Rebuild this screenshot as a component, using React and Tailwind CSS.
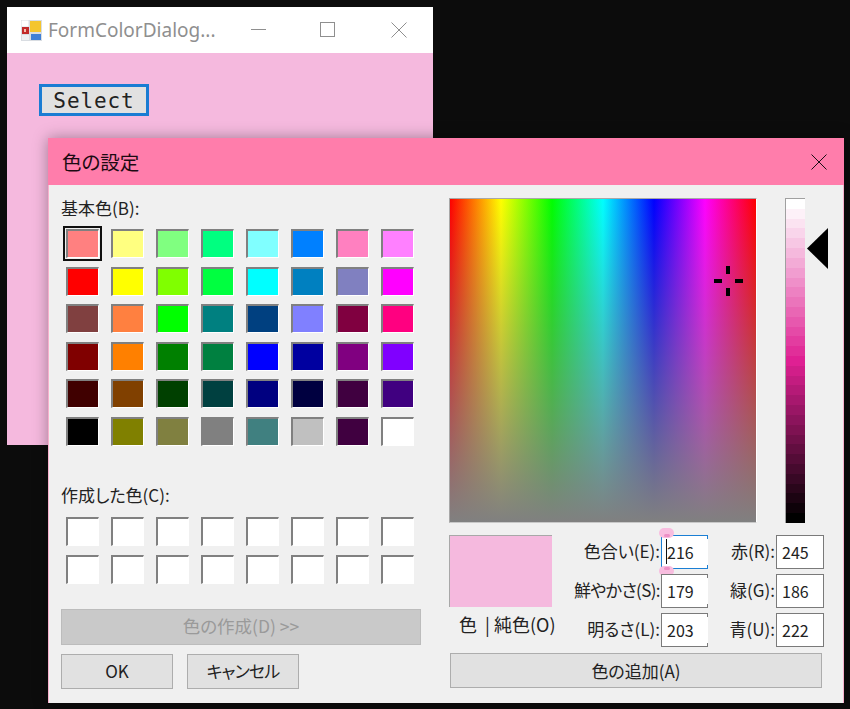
import React from 'react';

const basicColors = [
    '#ff8080', '#ffff80', '#80ff80', '#00ff80', '#80ffff', '#0080ff', '#ff80c0', '#ff80ff',
    '#ff0000', '#ffff00', '#80ff00', '#00ff40', '#00ffff', '#0080c0', '#8080c0', '#ff00ff',
    '#804040', '#ff8040', '#00ff00', '#008080', '#004080', '#8080ff', '#800040', '#ff0080',
    '#800000', '#ff8000', '#008000', '#008040', '#0000ff', '#0000a0', '#800080', '#8000ff',
    '#400000', '#804000', '#004000', '#004040', '#000080', '#000040', '#400040', '#400080',
    '#000000', '#808000', '#808040', '#808080', '#408080', '#c0c0c0', '#400040', '#ffffff',
];

const jp = 'font-["Noto_Sans_CJK_JP","Noto_Sans",sans-serif] [font-feature-settings:"palt"]';

// lum bar: hue 216 / sat 179 in the windows 0-240 scale
const lumSteps = Array.from({ length: 33 }, (_, i) => {
    const l = 100 - (i * 100) / 32;
    return `hsl(324 75% ${l}%)`;
});

function Swatch({ color, selected }) {
    return (
        <div className={`relative h-[29px] w-[33px] border-t-2 border-l-2 border-t-[#808080] border-l-[#808080] border-r border-b border-r-white border-b-white ${selected ? 'outline-2 outline-offset-1 outline-[#101010]' : ''}`}>
            <div className="h-full w-full" style={{ backgroundColor: color }} />
        </div>
    );
}

function SwatchGrid({ colors }) {
    return (
        <div className="grid grid-cols-[repeat(8,33px)] gap-x-[12.07px] gap-y-[8.6px]">
            {colors.map((c, i) => (
                <Swatch key={i} color={c} selected={colors.length > 16 && i === 0} />
            ))}
        </div>
    );
}

function Field({ label, value, labelClass, notched, focused }) {
    return (
        <div className="flex h-[34px] items-center">
            <div className={`pb-[3px] text-right text-[17px] leading-none whitespace-nowrap text-[#222] ${labelClass}`}>{label}</div>
            <div className={`relative ml-[1px] flex h-[34px] items-center bg-white pb-px pl-[5px] text-[16px] text-[#222] ${notched ? 'w-[47px] border-y border-l' : 'w-[48px] border'} ${focused ? 'border-[#1b7fd4]' : 'border-[#7a7a7a]'}`}>
                {value}
                {notched && (
                    <>
                        <span className={`absolute top-0 right-0 h-[3px] w-px ${focused ? 'bg-[#1b7fd4]' : 'bg-[#7a7a7a]'}`} />
                        <span className={`absolute right-0 bottom-0 h-[3px] w-px ${focused ? 'bg-[#1b7fd4]' : 'bg-[#7a7a7a]'}`} />
                    </>
                )}
                {focused && (
                    <>
                        <span className="absolute top-[3px] left-[4px] h-[25px] w-px bg-[#111]" />
                        <span className="absolute -top-[8px] -left-[3px] h-[10px] w-[15px] rounded-full bg-[#f8bddf]" />
                        <span className="absolute -bottom-[8px] -left-[3px] h-[10px] w-[15px] rounded-full bg-[#f8bddf]" />
                        <span className="absolute -top-[2px] left-[2px] h-[3px] w-[6px] rounded-full bg-[#ee8fc6]" />
                        <span className="absolute -bottom-[2px] left-[2px] h-[3px] w-[6px] rounded-full bg-[#ee8fc6]" />
                    </>
                )}
            </div>
        </div>
    );
}

function Btn({ children, className }) {
    return (
        <div className={`flex h-[35px] items-center justify-center border border-[#adadad] bg-[#e1e1e1] text-[17px] text-[#222] ${className}`}>
            {children}
        </div>
    );
}

function ColorDialog() {
    return (
        <div className={`absolute top-[138px] left-[48px] flex h-[565px] w-[796px] flex-col border-x border-[#f7b0cc] bg-[#f0f0f0] shadow-[0_0_14px_rgba(0,0,0,0.35)] ${jp}`}>
            <div className="-mx-px flex h-[47px] shrink-0 items-center justify-between bg-[#ff7dab] pr-[17px] pl-[14px]">
                <span className="text-[19.5px] text-[#1c0a12]">色の設定</span>
                <svg width="16" height="16" viewBox="0 0 16 16" stroke="#1a1015" fill="none">
                    <path d="M0.5 0.5 15.5 15.5M15.5 0.5 0.5 15.5" />
                </svg>
            </div>
            <div className="flex flex-1">
                <div className="flex w-[400px] flex-col pl-[12px]">
                    <div className="mt-[13px] h-[20px] text-[17px] leading-[20px] text-[#222]">基本色(B):</div>
                    <div className="mt-[11px] pl-[5px]">
                        <SwatchGrid colors={basicColors} />
                    </div>
                    <div className="mt-[39px] h-[20px] text-[17px] leading-[20px] text-[#222]">作成した色(C):</div>
                    <div className="mt-[12px] pl-[5px]">
                        <SwatchGrid colors={Array(16).fill('#ffffff')} />
                    </div>
                    <div className="mt-[25px] flex h-[36px] w-[360px] items-center justify-center border border-[#bcbcbc] bg-[#c9c9c9] text-[17.5px] text-[#9a9a9a]">
                        色の作成(D) &gt;&gt;
                    </div>
                    <div className="mt-[9px] flex gap-[14px]">
                        <Btn className="w-[112px]">OK</Btn>
                        <Btn className="w-[112px] tracking-[-0.8px]">キャンセル</Btn>
                    </div>
                </div>
                <div className="flex flex-col">
                    <div className="mt-[13px] flex items-start">
                        <div className="relative h-[325px] w-[308px] border-t border-l border-t-[#a8a8a8] border-l-[#a8a8a8] border-r border-b border-r-white border-b-[#c8c8c8] bg-[linear-gradient(to_right,#ff0000,#ffff00,#00ff00,#00ffff,#0000ff,#ff00ff,#ff0000)]">
                            <div className="h-full w-full bg-[linear-gradient(to_bottom,rgba(128,128,128,0),#808080)]" />
                            {/* crosshair */}
                            <span className="absolute top-[80px] left-[264px] h-[4px] w-[8px] bg-black" />
                            <span className="absolute top-[80px] left-[285px] h-[4px] w-[8px] bg-black" />
                            <span className="absolute top-[67px] left-[276px] h-[8px] w-[4px] bg-black" />
                            <span className="absolute top-[89px] left-[276px] h-[8px] w-[4px] bg-black" />
                        </div>
                        <div className="ml-[28px] flex h-[325px] w-[20px] flex-col border-t border-l border-[#a0a0a0]">
                            {lumSteps.map((c, i) => (
                                <div key={i} className="flex-1" style={{ backgroundColor: c }} />
                            ))}
                        </div>
                        <svg className="mt-[30px] ml-[2px]" width="22" height="41" viewBox="0 0 22 41">
                            <path d="M0 20.5 21 0V41Z" fill="#000" />
                        </svg>
                    </div>
                    <div className="mt-[12px] flex items-start">
                        <div className="flex w-[103px] flex-col items-start">
                            <div className="h-[72px] w-[103px] border-t border-l border-[#a8a8a8] border-r-white border-b-white bg-[#f5b9de]" />
                            <div className="mt-[7px] ml-[10px] text-[18px] leading-[20px] whitespace-nowrap text-[#222]">色 &nbsp;| 純色(O)</div>
                        </div>
                        <div className="ml-[7px] flex flex-col gap-[5px]">
                            <Field label="色合い(E):" value="216" labelClass="w-[101px]" notched focused />
                            <Field label="鮮やかさ(S):" value="179" labelClass="w-[101px] tracking-[-0.6px]" notched />
                            <Field label="明るさ(L):" value="203" labelClass="w-[101px]" notched />
                        </div>
                        <div className="ml-[5px] flex flex-col gap-[5px]">
                            <Field label="赤(R):" value="245" labelClass="w-[62px]" />
                            <Field label="緑(G):" value="186" labelClass="w-[62px]" />
                            <Field label="青(U):" value="222" labelClass="w-[62px]" />
                        </div>
                    </div>
                    <Btn className="mt-[6px] ml-px w-[372px]">色の追加(A)</Btn>
                </div>
            </div>
        </div>
    );
}

function AppIcon() {
    return (
        <svg width="21" height="21" viewBox="0 0 21 21">
            <rect width="21" height="21" fill="#d9dde2" />
            <rect x="0.5" y="0.5" width="7" height="6" fill="#fff" />
            <rect x="1" y="7" width="7" height="7" fill="#c22a2a" />
            <rect x="3" y="9" width="2" height="3" fill="#f5c0b0" />
            <rect x="9" y="1" width="11" height="11" fill="#f4c52e" />
            <rect x="10" y="14" width="10" height="6" fill="#3f7fd6" />
            <rect x="1" y="15" width="7" height="5" fill="#eef0f2" />
        </svg>
    );
}

export default function App() {
    return (
        <div className="relative h-[709px] w-[850px] overflow-hidden bg-[#0c0c0c]">
            <div className="absolute top-[7px] left-[7px] flex h-[438px] w-[426px] flex-col bg-[#f5b9de]">
                <div className="flex h-[46px] shrink-0 items-center bg-white pl-[14px] font-['Noto_Sans',sans-serif]">
                    <AppIcon />
                    <span className="ml-[6px] w-[187px] text-[19px] whitespace-nowrap text-[#8f8f8f]">FormColorDialog...</span>
                    <div className="flex items-center text-[#8f8f8f]">
                        <svg className="ml-[16px]" width="16" height="16" viewBox="0 0 16 16" stroke="#8f8f8f" fill="none">
                            <path d="M0 7.5H15" />
                        </svg>
                        <svg className="ml-[53px]" width="16" height="16" viewBox="0 0 16 16" stroke="#8f8f8f" fill="none">
                            <rect x="0.5" y="0.5" width="14" height="14" />
                        </svg>
                        <svg className="ml-[55px]" width="16" height="16" viewBox="0 0 16 16" stroke="#8f8f8f" fill="none">
                            <path d="M0.5 0.5 15.5 15.5M15.5 0.5 0.5 15.5" />
                        </svg>
                    </div>
                </div>
                <div className="mt-[31px] ml-[32px] flex h-[32px] w-[110px] items-center justify-center border-[3px] border-[#1a7cd3] bg-[#e1e1e1] pt-[3px] font-['DejaVu_Sans_Mono',monospace] text-[21px] tracking-[0.9px] text-[#222]">
                    Select
                </div>
            </div>
            <ColorDialog />
        </div>
    );
}
